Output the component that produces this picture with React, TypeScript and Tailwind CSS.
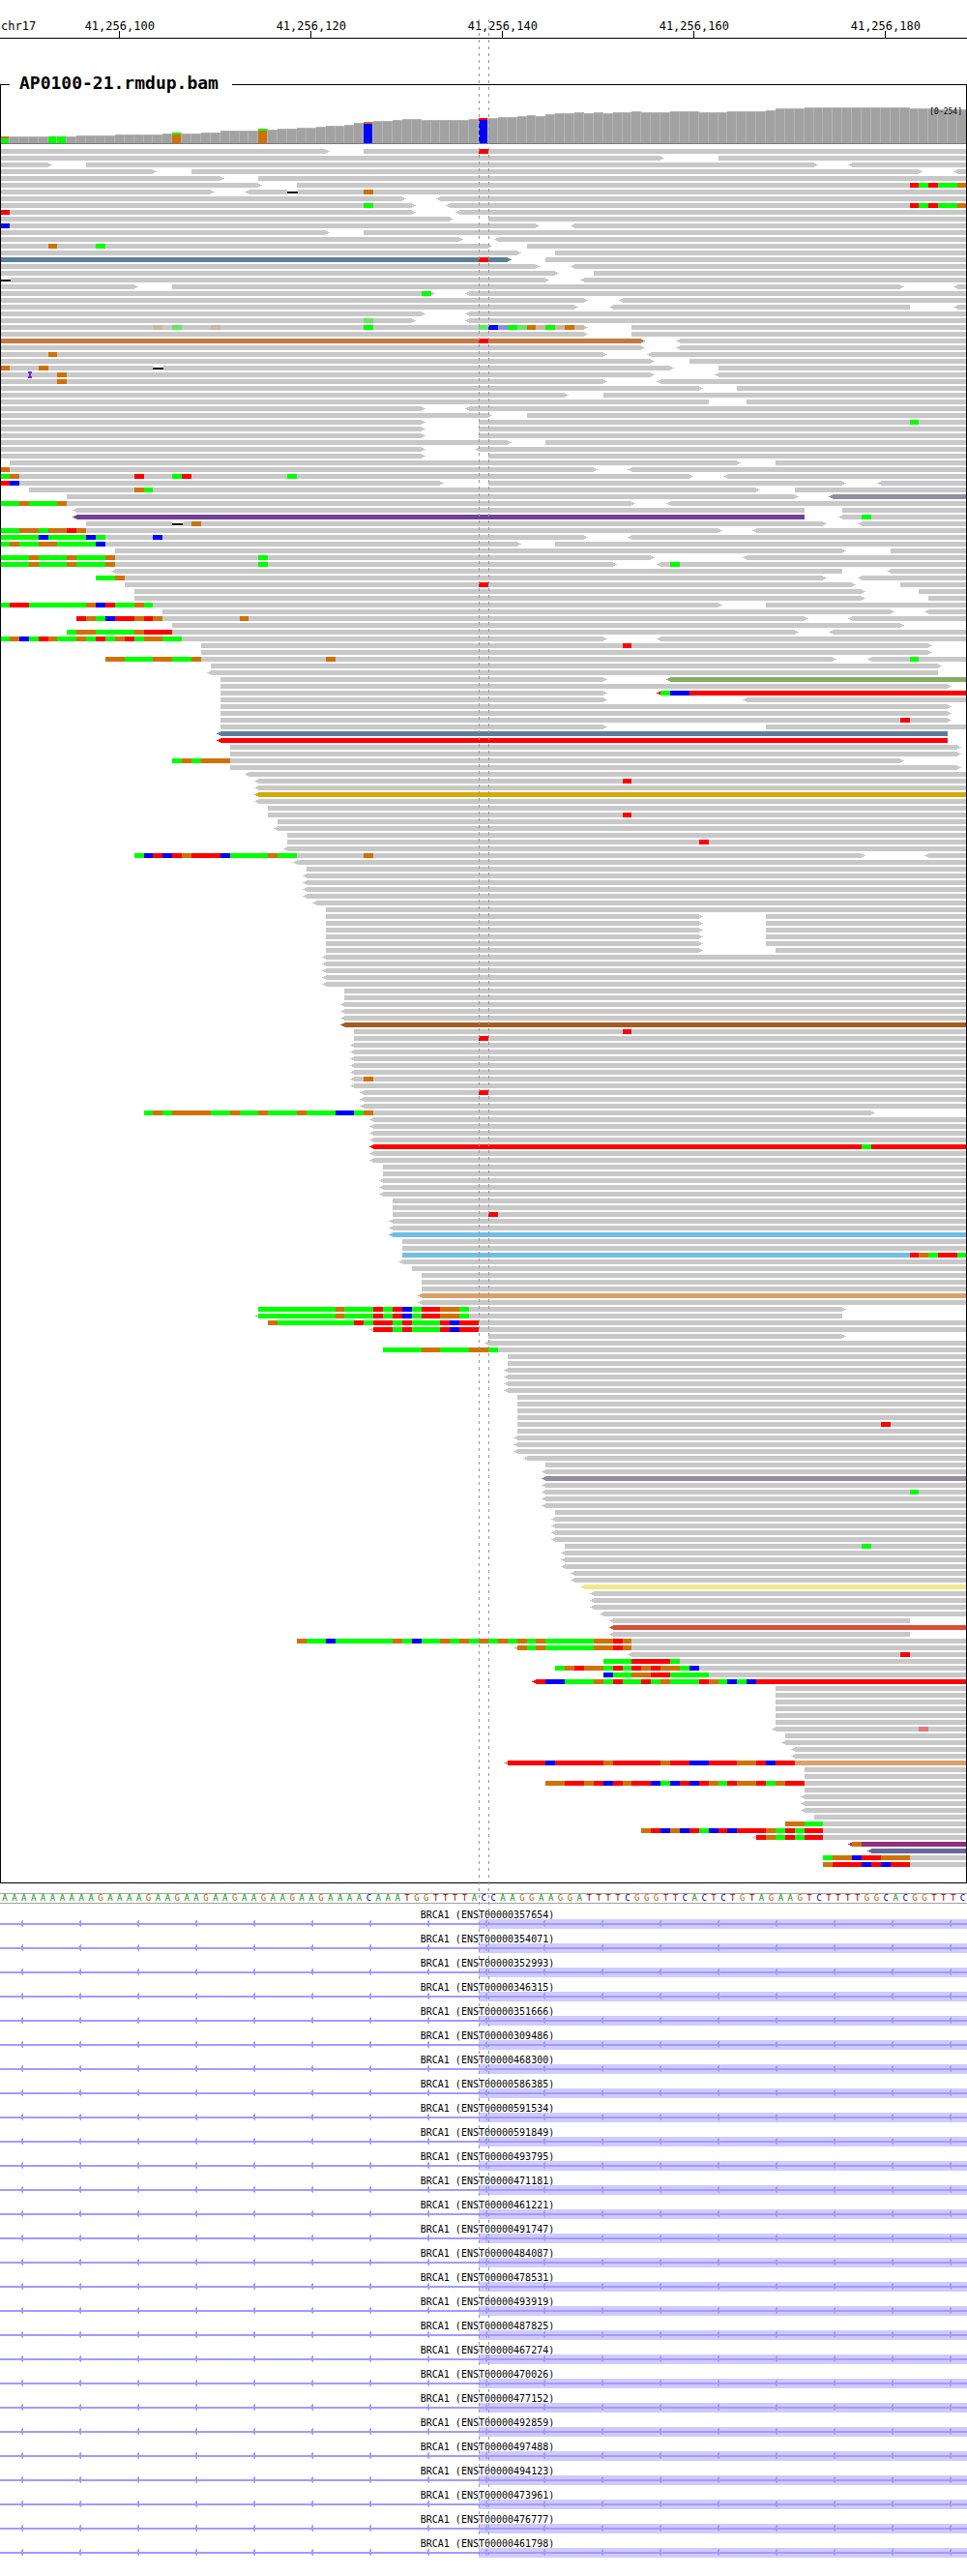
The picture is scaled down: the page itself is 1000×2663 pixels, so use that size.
import React from "react";

const BASES = 101;
const edge = (i: number) => Math.round((i * 1000) / BASES);

const SEQUENCE =
  "AAAAAAAAAAGAAAAGAAGAAGAAGAAGAAGAAGAAAACAAATGGTTTTAC" +
  "CAAGGAAGGATTTTCGGGTTCACTCTGTAGAAGTCTTTTGGCACGGTTTC";

const TICKS = ["41,256,100", "41,256,120", "41,256,140", "41,256,160", "41,256,180"];

const TRANSCRIPTS = [
  "357654", "354071", "352993", "346315", "351666", "309486", "468300", "586385", "591534",
  "591849", "493795", "471181", "461221", "491747", "484087", "478531", "493919", "487825",
  "467274", "470026", "477152", "492859", "497488", "494123", "473961", "476777", "461798",
];

// Upper case: confident mismatch. Lower case: low base quality.
const BASE_COLOR: Record<string, string> = {
  R: "#ff0000", G: "#00ff00", B: "#0000ff", O: "#d17105",
  r: "#e07878", g: "#64e664", b: "#8e8edc", o: "#cdb6a0",
};

const READ_COLOR: Record<string, string> = {
  gray: "#c8c8c8", steel: "#5c7f99", copper: "#c67842", mauve: "#958ca0", purple: "#733f95",
  moss: "#87ab63", red: "#ff0000", gold: "#d3a905", brown: "#a65b23", sky: "#70bee7",
  sand: "#dca168", lemon: "#f2e88a", brick: "#d94f36", plum: "#912f7c", slate: "#63699b",
};

// One string per row. "<a-b>" is a read over bases a..b with optional arrow tips,
// "12RGB" a run of mismatches, "D30" a deletion, "I3" an insertion, "4*" repeats the row.
const ROWS = [
  "0-34> 38- 50R", "0-69> 75-", "0-5> 9-85> <89-", "0-16> 20-96> <100-", "0-23> 27-",
  "0-27> 31- 95RGRGGO", "0-22> <26- D30 38O", "0-42> <46-", "0-43> <47- 38G 95RGRGGO",
  "0-43> <48- 0R", "0-47> 51-", "0-56> <60- 0B", "0-34> 38-", "0-48> <52-", "0-51> 55- 5O 10G",
  "0-54> 58-", "steel:0-53> 57- 50R", "0-56> <60-", "0-58> 62-", "0-57> <61- D0",
  "0-14> 18-94> <100-", "0-45> <49- 44G", "0-61> <65-", "0-60> <64-95 <100-", "0-44> <49-",
  "0-43> <49- 38g", "0-61> 66- 16o 18g 22o 38G 50gBbGgOoGoOo", "0-61> 66-",
  "copper:0-67> <71- 50R", "0-67> <71-", "0-63> <68- 5O", "0-68> 72-", "0-70> 75- 0O 4O D16",
  "0-68> <75- I3 6O", "0-63> <69- 6O", "0-73> 77-", "0-59> 63-", "0-74 78-", "0-44> <49-", "0-51> 55-",
  "0-44> 50- 95G", "2*0-44> 50-", "0-53> 57-", "0-44> <50-", "0-44> 51-", "1-77> 81-",
  "0-62> <66- 0O", "0-72> <76- 0GO 14R 18GR 30G", "0-46> 51-88> <92- 0RB", "3-79> 83- 14OG",
  "7-83> mauve:<87-", "0-66> <70- 0GGOGGGO", "<8-84 88-", "purple:<8-84 <88- 90G",
  "9-86> <90- D18 20O", "0-75> <79- 0GGOOGOORO", "0-61> <66- 0GGGGBGGGGBG 16B",
  "0-54> 58- 0GOGGOOGGGGB", "12-88> 93-", "0-68> <78- 0GGGOGGGOGGGO 27G",
  "0-64> <69- 0GGGOGGGOGGGO 27G 70G", "<12-88 <93-", "10-86> <90- 10GGO", "13-89> 94- 50R",
  "14-90> 96-", "14-90> 97-", "0-75> 80- 0GRRGGGGGGOBRGGOG", "17-93> <97-",
  "8-84> <89- 8ROGBRRORO 25O", "18-94>", "7-83> <87- 7GOOGGGGORRR",
  "0-63> <69- 0GOBGROGGOGRGORGOOGG", "21-97> 65R", "21-97>", "11-87> <91- 11OOGGGOOGGO 34O 95G",
  "22-98>", "<22-98",
  "23-63> moss:<70-", "23-99>", "23-63> red:<69- 69GBB", "23-63> <78-", "2*23-99>", "23-99> 94R",
  "23-63> 80-", "steel:<23-99", "red:<23-99", "2*24-100>", "18-94> 18GOGOOO", "24-100>", "<26-",
  "<27- 65R", "<27-", "gold:<27-", "<27-", "28-", "28- 65R", "29-", "<29-", "30-", "30- 73R", "<30-",
  "14-90> <97- 14GBRBRORRRBGGGGOGG 38O", "<31-", "32-", "4*<32-", "<33-", "34-", "5*34-73> 80-",
  "34-73> 81-", "5*<34-", "2*36-", "3*<36-", "brown:<36-", "37- 65R", "37- 50R", "5*<37-",
  "<37- 38O", "<37-", "<38- 50R", "2*<38-", "15-91> 15GOGOOOOGGOGGOGGGOGGGBBGO", "4*<39-",
  "red:<39- 90G", "2*<39-", "2*40-", "3*<40-", "2*41-", "41- 51R", "2*<41-", "sky:<41-", "2*42-",
  "sky:42- 95ROGRRG", "<42-", "43-", "3*44-", "sand:<44-", "<44-",
  "27-88> 27GGGGGGGGOGGGRGRBGRROOG", "<27-88 27GGGGGGGGOGGGRGRBGRROOG",
  "28- 28OGGGGGGGGRGRRGRGGGRBRR", "<39- 39RRGRGGGRBRR", "51-88>", "<51-", "40- 40GGGGOOGGGOOG",
  "2*53-", "4*<53-", "4*54-", "54- 92R", "54-", "3*<54-", "<55-", "57-", "<57-", "mauve:<57-", "<57-",
  "<57- 95G", "2*<57-", "58-", "4*<58-", "59- 90G", "3*<59-", "2*<60-", "lemon:<61-", "3*<62-",
  "<63-", "<64-95", "brick:<64-", "<64-95",
  "31- 31OGGBGGGGGGOGBGGOGOGOGOGOGOGGGGGOORO", "<54- 54OGOGGGGGOORO", "<66- 94R",
  "63- 63GGGRRRRG", "58- 58GOROOGRGROROOGB", "63- 63BGGOORRGGGG",
  "red:<56- 56RBBGGGOGRGGRGOGGGROGBGB", "6*81-", "<81- 96r", "82-", "<82-", "2*<83-",
  "sand:<53- 53RRRRBRRRRRORRRRRORRBBRRROORBRR", "2*84-",
  "57- 57OORRORBRORRBGBRBROGROORGORR", "84-", "3*<84-", "85-", "82- 82OOGG",
  "67- 67ORBOBRGBRBRRROGRGRR", "<79- 79ROGRGRR", "plum:<89- 89O", "slate:<91-",
  "86- 86GOOBRROOO", "86- 86ORRRBRBRR",
];

const READS = ROWS.flatMap((row) => {
  const repeated = /^(\d+)\*(.*)$/.exec(row);
  return repeated ? Array<string>(Number(repeated[1])).fill(repeated[2]) : [row];
});

const FIRST_ROW = 154;
const ROW_PITCH = 7;

function Mark({ token, y }: { token: string; y: number }) {
  const read = /^(?:([a-z]+):)?(<?)(\d+)-(\d*)(>?)$/.exec(token);
  if (read) {
    const x1 = edge(Number(read[3]));
    const x2 = edge(read[4] ? Number(read[4]) : BASES);
    const left = read[2] ? `M${x1} ${y + 1}h-2v1h-2v1h2v1h2z` : "";
    const right = read[5] ? `M${x2} ${y + 1}h2v1h2v1h-2v1h-2z` : "";
    return <path d={`M${x1} ${y}H${x2}v5H${x1}z${left}${right}`} fill={READ_COLOR[read[1] ?? "gray"]} />;
  }
  if (token[0] === "D") {
    const i = Number(token.slice(1));
    const width = edge(i + 1) - edge(i) + 1;
    return (
      <>
        <rect x={edge(i)} y={y} width={width} height={5} fill="#fff" />
        <rect x={edge(i)} y={y + 2} width={width} height={2} fill="#000" />
      </>
    );
  }
  if (token[0] === "I") {
    const x = edge(Number(token.slice(1)));
    return <path d={`M${x - 1} ${y - 1}h4v2h-1v3h1v2h-4v-2h1v-3h-1z`} fill="#7b1fe0" />;
  }
  const run = /^(\d+)([A-Za-z]+)$/.exec(token);
  if (!run) return null;
  const start = Number(run[1]);
  return (
    <>
      {[...run[2]].map((base, n) => (
        <rect
          key={n}
          x={edge(start + n)}
          y={y}
          width={edge(start + n + 1) - edge(start + n)}
          height={5}
          fill={BASE_COLOR[base]}
        />
      ))}
    </>
  );
}

function Pileup() {
  return (
    <svg
      className="block h-[1797px] w-full"
      viewBox="1 149 998 1797"
      preserveAspectRatio="none"
      shapeRendering="crispEdges"
      role="img"
      aria-label="Aligned reads"
    >
      {READS.map((row, k) => (
        <g key={k}>
          {row.split(" ").map((token, n) => (
            <Mark key={n} token={token} y={FIRST_ROW + ROW_PITCH * k} />
          ))}
        </g>
      ))}
    </svg>
  );
}

// [number of bases, top of their bars]
const COVERAGE_RUNS: [number, number][] = [
  [8, 141], [4, 140], [5, 139], [1, 138], [1, 137], [2, 138], [2, 137], [4, 135], [1, 133], [1, 134],
  [2, 133], [2, 132], [1, 131], [2, 130], [1, 129], [1, 127], [1, 126], [2, 125], [1, 124], [2, 123],
  [5, 124], [1, 123], [2, 122], [2, 121], [1, 120], [1, 119], [1, 120], [1, 118], [2, 117], [1, 116],
  [1, 117], [1, 116], [1, 117], [2, 116], [1, 115], [3, 116], [3, 115], [3, 116], [4, 115], [1, 114],
  [3, 112], [11, 111], [3, 112], [3, 113],
];
const COVERAGE = COVERAGE_RUNS.flatMap(([n, top]) => Array<number>(n).fill(top));

const ALLELES: Record<number, [string, string, number]> = {
  0: ["O", "G", 2], 5: ["G", "G", 1], 6: ["G", "G", 1], 18: ["G", "O", 2],
  27: ["G", "O", 2], 38: ["O", "B", 2], 50: ["R", "B", 2],
};

function Coverage() {
  return (
    <svg
      className="block h-[51px] w-full"
      viewBox="1 98 998 51"
      preserveAspectRatio="none"
      shapeRendering="crispEdges"
      role="img"
      aria-label="Read coverage"
    >
      {COVERAGE.map((top, i) => {
        const x = edge(i);
        const w = edge(i + 1) - x;
        const allele = ALLELES[i];
        return (
          <g key={i}>
            <rect x={x} y={top} width={w} height={148 - top} fill="#b4b4b4" />
            {allele ? (
              <>
                <rect x={x} y={top} width={w - 1} height={allele[2]} fill={BASE_COLOR[allele[0]]} />
                <rect
                  x={x}
                  y={top + allele[2]}
                  width={w - 1}
                  height={148 - top - allele[2]}
                  fill={BASE_COLOR[allele[1]]}
                />
              </>
            ) : (
              <rect x={x} y={top + 1} width={w - 1} height={147 - top} fill="#a2a2a2" />
            )}
          </g>
        );
      })}
      <rect x="54" y="141" width="1" height="1" fill="#d17105" />
      <rect x="64" y="141" width="1" height="1" fill="#d17105" />
      <rect x="0" y="148" width="1000" height="1" fill="#787878" />
    </svg>
  );
}

const LETTER_CLASS: Record<string, string> = {
  A: "text-[#009600]",
  C: "text-[#000096]",
  G: "text-[#b4640a]",
  T: "text-[#a00000]",
};

const GENE_ARROWS = Array.from({ length: 17 }, (_, i) => 21 + 60 * i);

function Transcript({ id }: { id: string }) {
  return (
    <li className="pt-[6px]">
      <p className="ml-2 h-[9px] text-center text-[10px] leading-[10px]">BRCA1 (ENST00000{id})</p>
      <svg
        className="block h-[10px] w-full"
        viewBox="0 0 1000 10"
        preserveAspectRatio="none"
        shapeRendering="crispEdges"
        aria-hidden="true"
      >
        <rect x="495" y="0" width="505" height="10" fill="#d0caff" />
        <rect x="0" y="4" width="1000" height="2" fill="#a09bff" />
        {GENE_ARROWS.map((x) => (
          <path key={x} d={`M${x + 3} 1h-1v1h-1v2h-1v2h1v1h1v1h1z`} fill="#a09bff" />
        ))}
      </svg>
    </li>
  );
}

function Guide({ className }: { className: string }) {
  return (
    <div
      className={`pointer-events-none absolute top-5 bottom-5 w-px bg-[repeating-linear-gradient(to_bottom,#969696_0px_3px,transparent_3px_7px)] ${className}`}
    />
  );
}

export default function App() {
  return (
    <main className="relative w-full overflow-hidden bg-white pb-[19px] font-['DejaVu_Sans_Mono',monospace] text-black">
      <header className="flex h-10 items-end border-b border-black text-[12px] leading-[9px]">
        <span className="ml-px w-0 self-end pb-[7px] whitespace-nowrap">chr17</span>
        <div className="flex flex-1 justify-between pr-[calc(100%*8.5/101)] pl-[calc(100%*12.5/101-1px)]">
          {TICKS.map((tick) => (
            <div key={tick} className="flex w-0 flex-col items-center whitespace-nowrap">
              <span>{tick}</span>
              <span className="h-[7px] w-px bg-black" />
            </div>
          ))}
        </div>
      </header>

      <fieldset className="mt-[37px] min-w-0 border border-black">
        <legend className="ml-[9px] pr-[14px] pb-[3px] pl-[10px] text-[18px] leading-[18px] font-bold">
          AP0100-21.rmdup.bam
        </legend>
        <div className="relative">
          <Coverage />
          <span className="absolute right-1 bottom-[28px] text-[8px] leading-[10px]">[0-254]</span>
        </div>
        <Pileup />
      </fieldset>

      <div className="mt-[10px] flex border-y border-[#a0a0a0] text-[9px] leading-[9px]">
        {[...SEQUENCE].map((base, i) => (
          <span key={i} className={`w-0 flex-1 text-center ${LETTER_CLASS[base]}`}>
            {base}
          </span>
        ))}
      </div>

      <ul className="mt-px">
        {TRANSCRIPTS.map((id) => (
          <Transcript key={id} id={id} />
        ))}
      </ul>

      <Guide className="left-[49.5%]" />
      <Guide className="left-[50.5%]" />
    </main>
  );
}
